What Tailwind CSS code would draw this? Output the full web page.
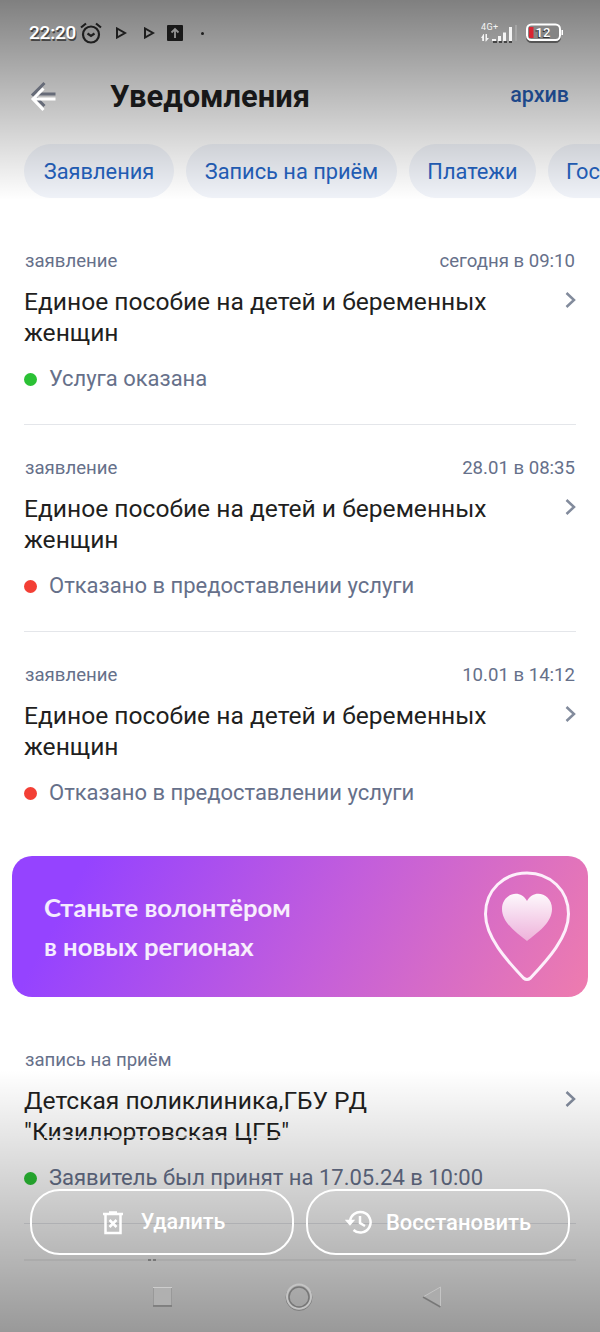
<!DOCTYPE html>
<html lang="ru">
<head>
<meta charset="utf-8">
<title>Уведомления</title>
<script src="https://cdn.jsdelivr.net/npm/@tailwindcss/browser@4"></script>
</head>
<body class="bg-white">
<div class="relative flex h-[1332px] w-[600px] flex-col overflow-hidden bg-white font-['Roboto','Noto_Sans',sans-serif] text-[#1f1f21]">

  <!-- status bar -->
  <div class="flex h-[66px] shrink-0 items-center pl-[29px] pr-[35px]">
    <span class="relative z-20 mt-[-2px] w-[48px] whitespace-nowrap text-[19px] font-medium leading-none tracking-[-0.2px] text-white [text-shadow:1px_2px_0px_#444]">22:20</span>
    <svg class="ml-[3px] h-[22px] w-[22px]" viewBox="0 0 22 22" fill="none" stroke="#333" stroke-width="2.200"><circle cx="11" cy="12.500" r="8"/><path d="M1 5.500l5-4M21 5.500l-5-4M7.500 11.500l3.500 2.500 3.500-2.500"/></svg>
    <svg class="ml-[13px] h-[12px] w-[12px]" viewBox="0 0 12 12" fill="none" stroke="#333" stroke-width="2"><path d="M2 1.500v9l8-4.500z"/></svg>
    <svg class="ml-[16px] h-[12px] w-[12px]" viewBox="0 0 12 12" fill="none" stroke="#333" stroke-width="2"><path d="M2 1.500v9l8-4.500z"/></svg>
    <svg class="ml-[12px] h-[16px] w-[16px]" viewBox="0 0 16 16" fill="none"><rect width="16" height="16" rx="1" fill="#2b2b2b"/><path d="M8 13V4M4.500 7.500L8 4l3.500 3.500" stroke="#fff" stroke-width="1.800"/></svg>
    <span class="ml-[18px] h-[3px] w-[3px] rounded-full bg-[#333]"></span>
    <div class="relative z-20 ml-auto flex items-center">
      <svg class="h-[24px] w-[38px]" viewBox="0 0 38 24"><g fill="#444"><path d="M12 20h4v2h-4zM18 20h3v2h-3zM23 20h3v2h-3zM28 20h3v2h-3z"/></g><text x="0" y="9" font-size="9" font-family="Roboto" fill="#f4f4f4" textLength="17">4G+</text><g fill="#f4f4f4"><path d="M11 18h4v2h-4zM17 15h3v5h-3zM22 11.500h3v8.500h-3zM28 6h3v14h-3z"/><path d="M34 4h2v16h-2z" fill="#a5a5a5"/><path d="M0 17l2.500-4 .5 0v7H1.200v-3zM4.500 13h1.500v4H8l-3 3.500h-.5z"/></g></svg>
      <svg class="ml-[6px] h-[22px] w-[40px]" viewBox="0 0 40 22"><rect x="2" y="4" width="33" height="16" rx="4.500" fill="none" stroke="#555" stroke-width="2"/><rect x="2" y="2.500" width="33" height="15.500" rx="4.500" fill="#858585" stroke="#fff" stroke-width="2"/><path d="M36.500 8H38v5h-1.500z" fill="#fff"/><rect x="4" y="5" width="4.500" height="11" fill="#d92532"/><text x="9.500" y="16" font-size="13.500" font-weight="700" font-family="Roboto" fill="#333">12</text><text x="10.500" y="15" font-size="13" font-family="Roboto" font-weight="500" fill="#fff">12</text></svg>
    </div>
  </div>

  <!-- header -->
  <header class="flex h-[60px] shrink-0 items-center pl-[30px] pr-[31px]">
    <svg class="relative z-20 mt-[2px] h-[32px] w-[28px]" viewBox="0 0 28 32" fill="none" stroke-width="3"><path d="M25.500 13H4M14.500 2L3 13.500 14.500 25" stroke="#666b78"/><path d="M25.500 18H4M13.500 7.500L3 18l10.500 11" stroke="#fff"/></svg>
    <h1 class="ml-[52px] mt-[2px] whitespace-nowrap text-[30.900px] font-bold leading-none">Уведомления</h1>
    <span class="mb-[2px] ml-auto whitespace-nowrap text-[21.500px] font-medium leading-none text-[#2860b8]">архив</span>
  </header>

  <!-- filters -->
  <nav class="mt-[18px] flex h-[54px] shrink-0 gap-3 whitespace-nowrap pl-6 text-[21.800px] leading-[56px] text-[#2462bf]">
    <span class="w-[150px] shrink-0 rounded-full bg-[#f0f3f9] text-center">Заявления</span>
    <span class="w-[211px] shrink-0 rounded-full bg-[#f0f3f9] text-center">Запись на приём</span>
    <span class="w-[127px] shrink-0 rounded-full bg-[#f0f3f9] text-center">Платежи</span>
    <span class="w-[170px] shrink-0 rounded-full bg-[#f0f3f9] pl-[18px]">Гос</span>
  </nav>

  <main class="flex flex-col pt-[20px]">
    <article class="mx-6 flex h-[207px] flex-col border-b border-[#e4e6ea] pt-[31px]">
      <div class="flex justify-between px-px text-[18.600px] leading-[24px] text-[#66708a]"><span>заявление</span><span>сегодня в 09:10</span></div>
      <div class="mt-[13px] flex items-start justify-between text-[24.600px] leading-[31px]"><p class="whitespace-nowrap">Единое пособие на детей и беременных<br>женщин</p><svg class="mt-[5px] h-[18px] w-[12px]" viewBox="0 0 12 18" fill="none" stroke="#828b9c" stroke-width="2.500"><path d="M2.500 2l7.500 7-7.500 7"/></svg></div>
      <div class="mt-[17px] flex items-center text-[21.950px] leading-[28px] text-[#66708a]"><i class="mr-[12px] h-[13px] w-[13px] rounded-full bg-[#2bc135]"></i><span>Услуга оказана</span></div>
    </article>
    <article class="mx-6 flex h-[207px] flex-col border-b border-[#e4e6ea] pt-[31px]">
      <div class="flex justify-between px-px text-[18.600px] leading-[24px] text-[#66708a]"><span>заявление</span><span>28.01 в 08:35</span></div>
      <div class="mt-[13px] flex items-start justify-between text-[24.600px] leading-[31px]"><p class="whitespace-nowrap">Единое пособие на детей и беременных<br>женщин</p><svg class="mt-[5px] h-[18px] w-[12px]" viewBox="0 0 12 18" fill="none" stroke="#828b9c" stroke-width="2.500"><path d="M2.500 2l7.500 7-7.500 7"/></svg></div>
      <div class="mt-[17px] flex items-center text-[22px] leading-[28px] text-[#66708a]"><i class="mr-[12px] h-[13px] w-[13px] rounded-full bg-[#f33f35]"></i><span>Отказано в предоставлении услуги</span></div>
    </article>
    <article class="mx-6 flex h-[207px] flex-col pt-[31px]">
      <div class="flex justify-between px-px text-[18.600px] leading-[24px] text-[#66708a]"><span>заявление</span><span>10.01 в 14:12</span></div>
      <div class="mt-[13px] flex items-start justify-between text-[24.600px] leading-[31px]"><p class="whitespace-nowrap">Единое пособие на детей и беременных<br>женщин</p><svg class="mt-[5px] h-[18px] w-[12px]" viewBox="0 0 12 18" fill="none" stroke="#828b9c" stroke-width="2.500"><path d="M2.500 2l7.500 7-7.500 7"/></svg></div>
      <div class="mt-[17px] flex items-center text-[22px] leading-[28px] text-[#66708a]"><i class="mr-[12px] h-[13px] w-[13px] rounded-full bg-[#f33f35]"></i><span>Отказано в предоставлении услуги</span></div>
    </article>

    <!-- banner -->
    <section class="mx-3 mt-[17px] flex h-[141px] items-center justify-between rounded-[20px] bg-[linear-gradient(118deg,#9543ff_12%,#c35edb_55%,#ee7cae_100%)] pl-[32px] pr-[17px]">
      <p class="whitespace-nowrap font-['Lato',sans-serif] text-[25.650px] font-bold leading-[39px] text-white/90">Станьте волонтёром<br>в новых регионах</p>
      <svg class="h-[113px] w-[88px]" viewBox="0 0 88 113" fill="none"><defs><linearGradient id="heart" x1="0" y1="0" x2="0" y2="1"><stop offset="0" stop-color="#fff" stop-opacity=".95"/><stop offset="1" stop-color="#fff" stop-opacity=".45"/></linearGradient></defs><path d="M44 3C21 3 2.500 20 2.500 44c0 23 21 46 38 64q3.500 3 7 0c17-18 38-41 38-64C85.500 20 67 3 44 3z" stroke="#fdeffb" stroke-width="3"/><path d="M44 71C34 63 19 53 19 39c0-15 18-21 25-8 7-13 25-7 25 8 0 14-15 24-25 32z" fill="url(#heart)"/></svg>
    </section>

    <article class="mx-6 mt-[20px] flex h-[207px] flex-col border-b border-[#e4e6ea] pt-[31px]">
      <div class="px-px text-[18.600px] leading-[24px] text-[#66708a]"><span>запись на приём</span></div>
      <div class="mt-[13px] flex items-start justify-between text-[24.600px] leading-[31px]"><p class="relative whitespace-nowrap">Детская поликлиника,ГБУ РД<br>"Кизилюртовская ЦГБ"<i class="absolute top-[51px] left-[20px] h-[2px] w-[238px] bg-[repeating-linear-gradient(90deg,#fafafaee_0_9px,#f4f4f466_9px_13px)]"></i></p><svg class="mt-[5px] h-[18px] w-[12px]" viewBox="0 0 12 18" fill="none" stroke="#828b9c" stroke-width="2.500"><path d="M2.500 2l7.500 7-7.500 7"/></svg></div>
      <div class="mt-[17px] flex items-center text-[22px] leading-[28px] text-[#66708a]"><i class="mr-[12px] h-[13px] w-[13px] rounded-full bg-[#2bc135]"></i><span>Заявитель был принят на 17.05.24 в 10:00</span></div>
    </article>
  </main>

  <!-- shades over the page -->
  <div class="absolute inset-x-0 top-0 z-10 h-[200px] bg-linear-to-b from-black/50 to-transparent"></div>
  <div class="absolute inset-x-0 bottom-0 z-10 h-[262px] bg-linear-to-t from-black/40 to-transparent"></div>

  <!-- floating actions and navigation -->
  <div class="absolute inset-x-0 bottom-0 z-20 flex h-[143px] flex-col">
    <div class="flex gap-3 px-[30px] text-[22px] font-medium text-white">
      <button class="flex h-[66px] w-[264px] items-center justify-center gap-[18px] rounded-[30px] border-2 border-white pl-[4px] pt-px text-[21.500px]"><svg class="h-[24px] w-[20px]" viewBox="0 0 20 24" fill="none" stroke="#fff" stroke-width="2.500"><path d="M0 3h20M6 1.500h8M2.500 3v19h15V3M6.500 9l7 7M13.500 9l-7 7"/></svg>Удалить</button>
      <button class="flex h-[66px] w-[264px] items-center justify-center gap-[14px] rounded-[30px] border-2 border-white"><svg class="h-[24px] w-[27px]" viewBox="0 0 27 24" fill="none" stroke="#fff" stroke-width="2.500"><path d="M5 12a10.300 10.300 0 1 1 3.500 8M15 6v7l5 3"/><path d="M1.500 10.500h7L5 14.500z" fill="#fff" stroke-width="1.500"/></svg>Восстановить</button>
    </div>
    <div class="mx-6 mt-[4px] flex h-[2px] gap-[2px] bg-black/5 pl-[124px]"><i class="w-[3px] bg-[#777]"></i><i class="w-[3px] bg-[#777]"></i></div>
    <div class="flex flex-1 items-center pl-[151px]">
      <svg class="h-[24px] w-[24px]" viewBox="0 0 24 24" fill="none"><rect x="2.500" y="2.500" width="18" height="18" fill="#b0b0b0" stroke="#999"/><path d="M2 2.500h19" stroke="#ccc"/><path d="M2 21h19" stroke="#777" stroke-width="1.500"/></svg>
      <svg class="ml-[108px] h-[32px] w-[32px]" viewBox="0 0 32 32" fill="none"><circle cx="16" cy="16.500" r="13" stroke="#808080"/><circle cx="16" cy="15.500" r="12" stroke="#c4c4c4" stroke-width="2"/><circle cx="16" cy="16" r="10" stroke="#777" stroke-width="1.500"/></svg>
      <svg class="ml-[105px] h-[24px] w-[24px]" viewBox="0 0 24 24" fill="none"><path d="M20.500 2v20L3 12z" fill="#acacac" stroke="#c4c4c4"/><path d="M3 12l17.500 10" stroke="#777" stroke-width="1.500"/></svg>
    </div>
  </div>
</div>
</body>
</html>
